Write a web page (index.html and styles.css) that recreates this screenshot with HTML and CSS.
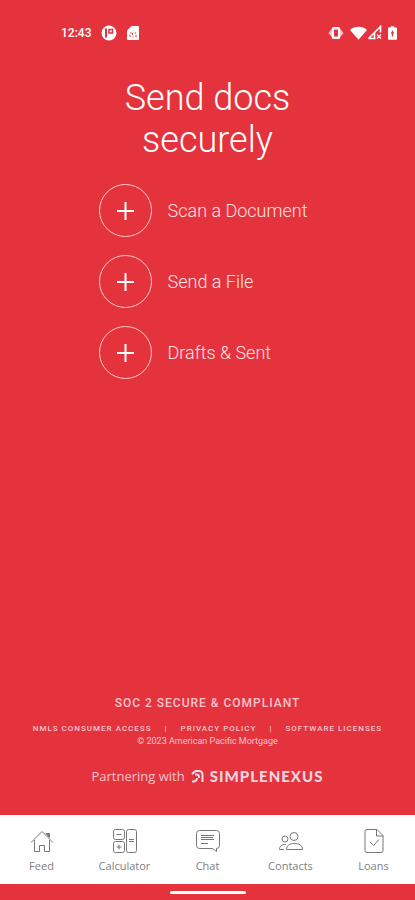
FILE: index.html
```
<!DOCTYPE html>
<html lang="en">
<head>
    <meta charset="UTF-8">
    <meta name="viewport" content="width=device-width, initial-scale=1.0">
    <title>Send docs securely</title>
    <link rel="stylesheet" href="styles.css">
</head>
<body>

<header class="status-bar">
    <div class="status-left">
        <span class="time">12:43</span>
        <svg width="16" height="16" viewBox="0 0 16 16" aria-hidden="true">
            <circle cx="8" cy="8" r="7.5" fill="#fff"/>
            <path d="M5 3.5v9" stroke="#e5333d" stroke-width="2"/>
            <path d="M8 4.5h3.5V8H8z" fill="none" stroke="#e5333d" stroke-width="1.6"/>
        </svg>
        <svg width="12" height="16" viewBox="0 0 12 16" aria-hidden="true">
            <path d="M4.5 1H11a1 1 0 0 1 1 1v12a1 1 0 0 1-1 1H1a1 1 0 0 1-1-1V5.5z" fill="#fff"/>
            <path d="M3 8h1.5M5.5 8v2M7.5 8H9M3 10v2M5.5 12h1M9 10v2" stroke="#e5333d" stroke-width="1"/>
        </svg>
    </div>
    <div class="status-right">
        <svg width="16" height="14" viewBox="0 0 16 14" aria-hidden="true">
            <path d="M4 2.5h8L15.5 7 12 11.5H4L.5 7z" fill="#fff" opacity=".7"/>
            <rect x="4" y="1" width="8" height="12" rx="1.5" fill="#fff"/>
            <rect x="6" y="3.5" width="4" height="7" fill="#e5333d"/>
        </svg>
        <svg class="wifi" width="17" height="14" viewBox="0 0 17 14" aria-hidden="true">
            <path d="M0 4C2.4 1.8 5.3.7 8.5.7S14.6 1.8 17 4L8.5 13.7z" fill="#fff"/>
        </svg>
        <svg width="15" height="15" viewBox="0 0 15 15" aria-hidden="true">
            <path d="M1.5 13.5 13.5 1.5v6M1.5 13.5h7M7.5 8v5" fill="none" stroke="#fff" stroke-width="1.6"/>
            <path d="M10 9.5l4 4M14 9.5l-4 4" stroke="#fff" stroke-width="1.3"/>
        </svg>
        <svg class="battery" width="9" height="14" viewBox="0 0 10 15" aria-hidden="true">
            <path d="M3 0h4v1.5h2a1 1 0 0 1 1 1V14a1 1 0 0 1-1 1H1a1 1 0 0 1-1-1V2.5a1 1 0 0 1 1-1h2z" fill="#fff"/>
            <path d="M5 4.5 7 8H5.8v3.5H4.2V8H3z" fill="#e5333d"/>
        </svg>
    </div>
</header>

<main class="content">
    <h1>Send docs<br>securely</h1>
    <div class="actions">
        <button type="button" class="action">
            <span class="circle">
                <svg width="17" height="18" viewBox="0 0 17 18" aria-hidden="true"><path d="M8.5 0v18M0 9h17"/></svg>
            </span>
            Scan a Document
        </button>
        <button type="button" class="action">
            <span class="circle">
                <svg width="17" height="18" viewBox="0 0 17 18" aria-hidden="true"><path d="M8.5 0v18M0 9h17"/></svg>
            </span>
            Send a File
        </button>
        <button type="button" class="action">
            <span class="circle">
                <svg width="17" height="18" viewBox="0 0 17 18" aria-hidden="true"><path d="M8.5 0v18M0 9h17"/></svg>
            </span>
            Drafts &amp; Sent
        </button>
    </div>
</main>

<footer class="legal">
    <p class="compliance">SOC 2 SECURE &amp; COMPLIANT</p>
    <div class="links">
        <a href="#nmls">NMLS CONSUMER ACCESS</a>
        <span>|</span>
        <a href="#privacy">PRIVACY POLICY</a>
        <span>|</span>
        <a href="#licenses">SOFTWARE LICENSES</a>
    </div>
    <p class="copyright">© 2023 American Pacific Mortgage</p>
    <div class="partner">
        <span>Partnering with</span>
        <svg width="13" height="14" viewBox="0 0 13 14" aria-hidden="true">
            <path d="M1 5 4.5 2H8a3.500 3.500 0 0 1 3.500 3.500V13M4 5.500h1.500A2.500 2.500 0 0 1 8 8v1M1 12.500h1.500A3.500 3.500 0 0 0 6 9"/>
        </svg>
        <strong>SIMPLENEXUS</strong>
    </div>
</footer>

<nav class="tabs">
    <a href="#feed">
        <svg width="26" height="26" viewBox="0 0 26 26" aria-hidden="true">
            <path d="M2 14.5 13 3.5 24 14.5M5.5 12V23.5h5v-6h5v6h5V12"/>
            <path d="M17 5.500h3.500v4z" fill="#777"/>
        </svg>
        Feed
    </a>
    <a href="#calculator">
        <svg width="26" height="26" viewBox="0 0 26 26" aria-hidden="true">
            <rect x="1.5" y="1.5" width="11" height="10" rx="2"/>
            <rect x="1.5" y="13.5" width="11" height="11" rx="2"/>
            <rect x="14.5" y="1.5" width="10" height="23" rx="2"/>
            <path d="M4.5 6.5h5M4.5 19h5M7 16.5v5M17 11.5h5M17 13.5h5"/>
        </svg>
        Calculator
    </a>
    <a href="#chat">
        <svg width="26" height="26" viewBox="0 0 26 26" aria-hidden="true">
            <path d="M4.5 2.5h17a3 3 0 0 1 3 3v12a3 3 0 0 1-3 3v3l-4-3h-13a3 3 0 0 1-3-3v-12a3 3 0 0 1 3-3z"/>
            <path d="M6 7.500h13M6 9.500h12M6 11.500h13M6 15.500h7"/>
        </svg>
        Chat
    </a>
    <a href="#contacts">
        <svg width="26" height="26" viewBox="0 0 26 26" aria-hidden="true">
            <circle cx="16" cy="8.5" r="4"/>
            <circle cx="7" cy="11" r="3"/>
            <path d="M8.5 21.5c0-4 3-6 8-6s8 2 8 6zM1.5 21.5H6M1.5 21.5C1.5 18 3.5 16.5 8 16.5"/>
        </svg>
        Contacts
    </a>
    <a href="#loans">
        <svg width="26" height="26" viewBox="0 0 26 26" aria-hidden="true">
            <path d="M6 1.5h10l6 6V22.5a2 2 0 0 1-2 2H6a2 2 0 0 1-2-2v-19a2 2 0 0 1 2-2zM15.5 1.5v6.5H22"/>
            <path d="m9 14 3.5 3.5 5.5-6"/>
        </svg>
        Loans
    </a>
</nav>

<div class="home-bar"><span></span></div>

</body>
</html>
```
FILE: styles.css
```
* {
    margin: 0;
    padding: 0;
    box-sizing: border-box;
}
body {
    display: flex;
    flex-direction: column;
    min-height: 100vh;
    background-color: #e5333d;
    color: #fff;
    font-family: Roboto, sans-serif;
}
a {
    color: inherit;
    text-decoration: none;
}

/* Status bar */
.status-bar {
    display: flex;
    justify-content: space-between;
    align-items: center;
    height: 65px;
    padding: 0 18px 0 61px;
}
.status-left, .status-right {
    display: flex;
    align-items: center;
}
.status-left {
    gap: 10px;
}
.time {
    font-size: 12px;
    font-weight: 500;
}
.wifi, .battery {
    margin-left: 6px;
}

/* Main actions */
.content {
    display: flex;
    flex-direction: column;
    align-items: center;
    flex: 1;
    padding-top: 12px;
}
h1 {
    font-size: 36px;
    font-weight: 300;
    line-height: 42px;
    text-align: center;
}
.actions {
    display: flex;
    flex-direction: column;
    gap: 18px;
    margin-top: 23px;
    padding-right: 9px;
}
.action {
    display: flex;
    align-items: center;
    gap: 16px;
    border: none;
    background: none;
    color: #ffe3e4;
    font-family: inherit;
    font-size: 18px;
    font-weight: 300;
    cursor: pointer;
}
.circle {
    display: flex;
    justify-content: center;
    align-items: center;
    width: 53px;
    height: 53px;
    border: 1px solid #ffc9cc;
    border-radius: 50%;
}
.circle svg {
    stroke: #fff;
    stroke-width: 2;
}

/* Legal footer */
.legal {
    text-align: center;
    color: #f6c3cd;
    padding-bottom: 29px;
}
.compliance {
    font-size: 12px;
    font-weight: 500;
    line-height: 16px;
    letter-spacing: 1px;
}
.links {
    display: flex;
    justify-content: center;
    gap: 13px;
    margin-top: 12px;
    font-size: 8px;
    font-weight: 500;
    line-height: 12px;
    letter-spacing: 1px;
}
.copyright {
    font-size: 9px;
    line-height: 12px;
}
.partner {
    display: flex;
    justify-content: center;
    align-items: center;
    gap: 6px;
    margin-top: 19px;
    font-family: "Open Sans", sans-serif;
    font-size: 13px;
    line-height: 20px;
}
.partner svg {
    fill: none;
    stroke: #dfe0ef;
    stroke-width: 2;
}
.partner strong {
    color: #ecd5e0;
    font-family: Lato, sans-serif;
    font-size: 15px;
    font-weight: 900;
    letter-spacing: 1px;
}

/* Bottom tabs */
.tabs {
    display: grid;
    grid-template-columns: repeat(5, 1fr);
    height: 69px;
    padding-top: 13px;
    background-color: #fff;
}
.tabs a {
    display: flex;
    flex-direction: column;
    align-items: center;
    gap: 4px;
    color: #808080;
    font-family: "Open Sans", sans-serif;
    font-size: 11px;
    line-height: 16px;
}
.tabs svg {
    fill: none;
    stroke: #777;
    stroke-width: 1;
}
.home-bar {
    display: flex;
    justify-content: center;
    align-items: center;
    height: 16px;
}
.home-bar span {
    width: 76px;
    height: 3px;
    border-radius: 2px;
    background-color: #fff;
}
```
